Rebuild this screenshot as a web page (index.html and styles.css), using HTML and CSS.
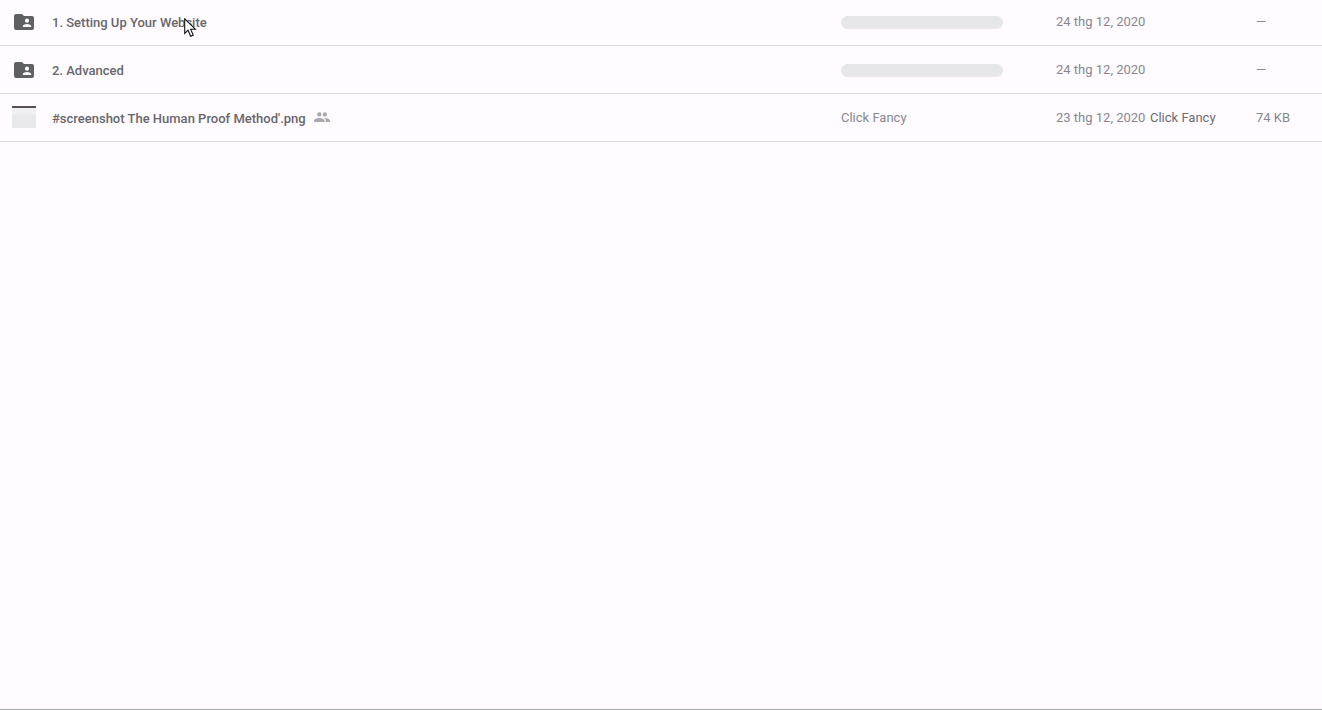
FILE: index.html
```html
<!DOCTYPE html>
<html lang="vi">
<head>
<meta charset="utf-8">
<title>Drive</title>
<link rel="stylesheet" href="styles.css">
</head>
<body>
<main class="page">
  <div class="list">
    <div class="row">
      <svg class="icon-folder" viewBox="0 0 20 16"><path fill="#5f6064" fill-rule="evenodd" d="M2 0h6l2 2h8a2 2 0 0 1 2 2v10a2 2 0 0 1-2 2H2a2 2 0 0 1-2-2V2a2 2 0 0 1 2-2zm11 4.600a2.100 2.100 0 1 0 0 4.200 2.100 2.100 0 0 0 0-4.200zM8.800 13h8.400v-1c0-1.400-2.800-2.100-4.200-2.100S8.800 10.600 8.800 12z"/></svg>
      <div class="name"><span>1. Setting Up Your Website</span></div>
      <div class="owner"><div class="skeleton"></div></div>
      <div class="date">24 thg 12, 2020</div>
      <div class="modifier"></div>
      <div class="size">—</div>
    </div>
    <div class="row">
      <svg class="icon-folder" viewBox="0 0 20 16"><path fill="#5f6064" fill-rule="evenodd" d="M2 0h6l2 2h8a2 2 0 0 1 2 2v10a2 2 0 0 1-2 2H2a2 2 0 0 1-2-2V2a2 2 0 0 1 2-2zm11 4.600a2.100 2.100 0 1 0 0 4.200 2.100 2.100 0 0 0 0-4.200zM8.800 13h8.400v-1c0-1.400-2.800-2.100-4.200-2.100S8.800 10.600 8.800 12z"/></svg>
      <div class="name"><span>2. Advanced</span></div>
      <div class="owner"><div class="skeleton"></div></div>
      <div class="date">24 thg 12, 2020</div>
      <div class="modifier"></div>
      <div class="size">—</div>
    </div>
    <div class="row">
      <div class="thumb"></div>
      <div class="name"><span>#screenshot The Human Proof Method'.png</span>
        <svg class="icon-shared" viewBox="0 0 16 10"><path fill="#a8a8ad" d="M5.300 4.600a2.200 2.200 0 1 0 0-4.400 2.200 2.200 0 0 0 0 4.400zm5.600 0a2.200 2.200 0 1 0 0-4.400 2.200 2.200 0 0 0 0 4.400zM5.300 6C3.500 6 0 6.900 0 8.500V10h10.600V8.500C10.600 6.900 7.100 6 5.300 6zm5.600 0h-.8c.9.600 1.700 1.400 1.700 2.500V10H16V8.500C16 6.900 12.700 6 10.900 6z"/></svg>
      </div>
      <div class="owner owner-text">Click Fancy</div>
      <div class="date">23 thg 12, 2020</div>
      <div class="modifier">Click Fancy</div>
      <div class="size">74 KB</div>
    </div>
  </div>
  <svg class="cursor" viewBox="0 0 13 20"><path fill="#fff" stroke="#111" stroke-width="1.100" d="M.7.800v14.600l3.400-3.200 2.500 6 2.600-1.100-2.500-5.900h4.700z"/></svg>
</main>
</body>
</html>
```

FILE: styles.css
```css
* { box-sizing: border-box; }
html, body { margin: 0; height: 100%; overflow: hidden; }
body {
  background: #fffbfe;
  font-family: Roboto, "Liberation Sans", sans-serif;
  font-size: 13px;
  color: #88888e;
}
.page {
  position: relative;
  height: 710px;
  border-bottom: 1px solid #a9aca8;
  overflow: hidden;
}
.list { margin-top: -2px; }
.row {
  display: grid;
  grid-template-columns: 52px 789px 215px 94px 106px 1fr;
  align-items: center;
  height: 48px;
  padding-top: 2px;
  border-bottom: 1px solid #dcdcdc;
}
.icon-folder { width: 20px; height: 16px; margin-left: 14px; margin-bottom: 1px; }
.thumb {
  width: 24px;
  height: 22px;
  margin-left: 12px;
  margin-top: -3px;
  background: linear-gradient(#f0eff2 0, #f0eff2 5px, #e9e8eb 8px);
  border-top: 2px solid #545457;
}
.name {
  display: flex;
  align-items: center;
  gap: 8px;
  color: #67676d;
  font-weight: 500;
  font-size: 13px;
}
.icon-shared { width: 16px; height: 10px; margin-top: -3px; }
.skeleton { width: 162px; height: 13px; border-radius: 7px; background: #e7e6ea; }
.date { margin-top: -2px; }
.owner-text { margin-top: -2px; }
.modifier { color: #6c6c72; margin-top: -2px; }
.size { margin-top: -2px; }
.cursor { position: absolute; left: 184px; top: 18px; width: 13px; height: 20px; }
```
